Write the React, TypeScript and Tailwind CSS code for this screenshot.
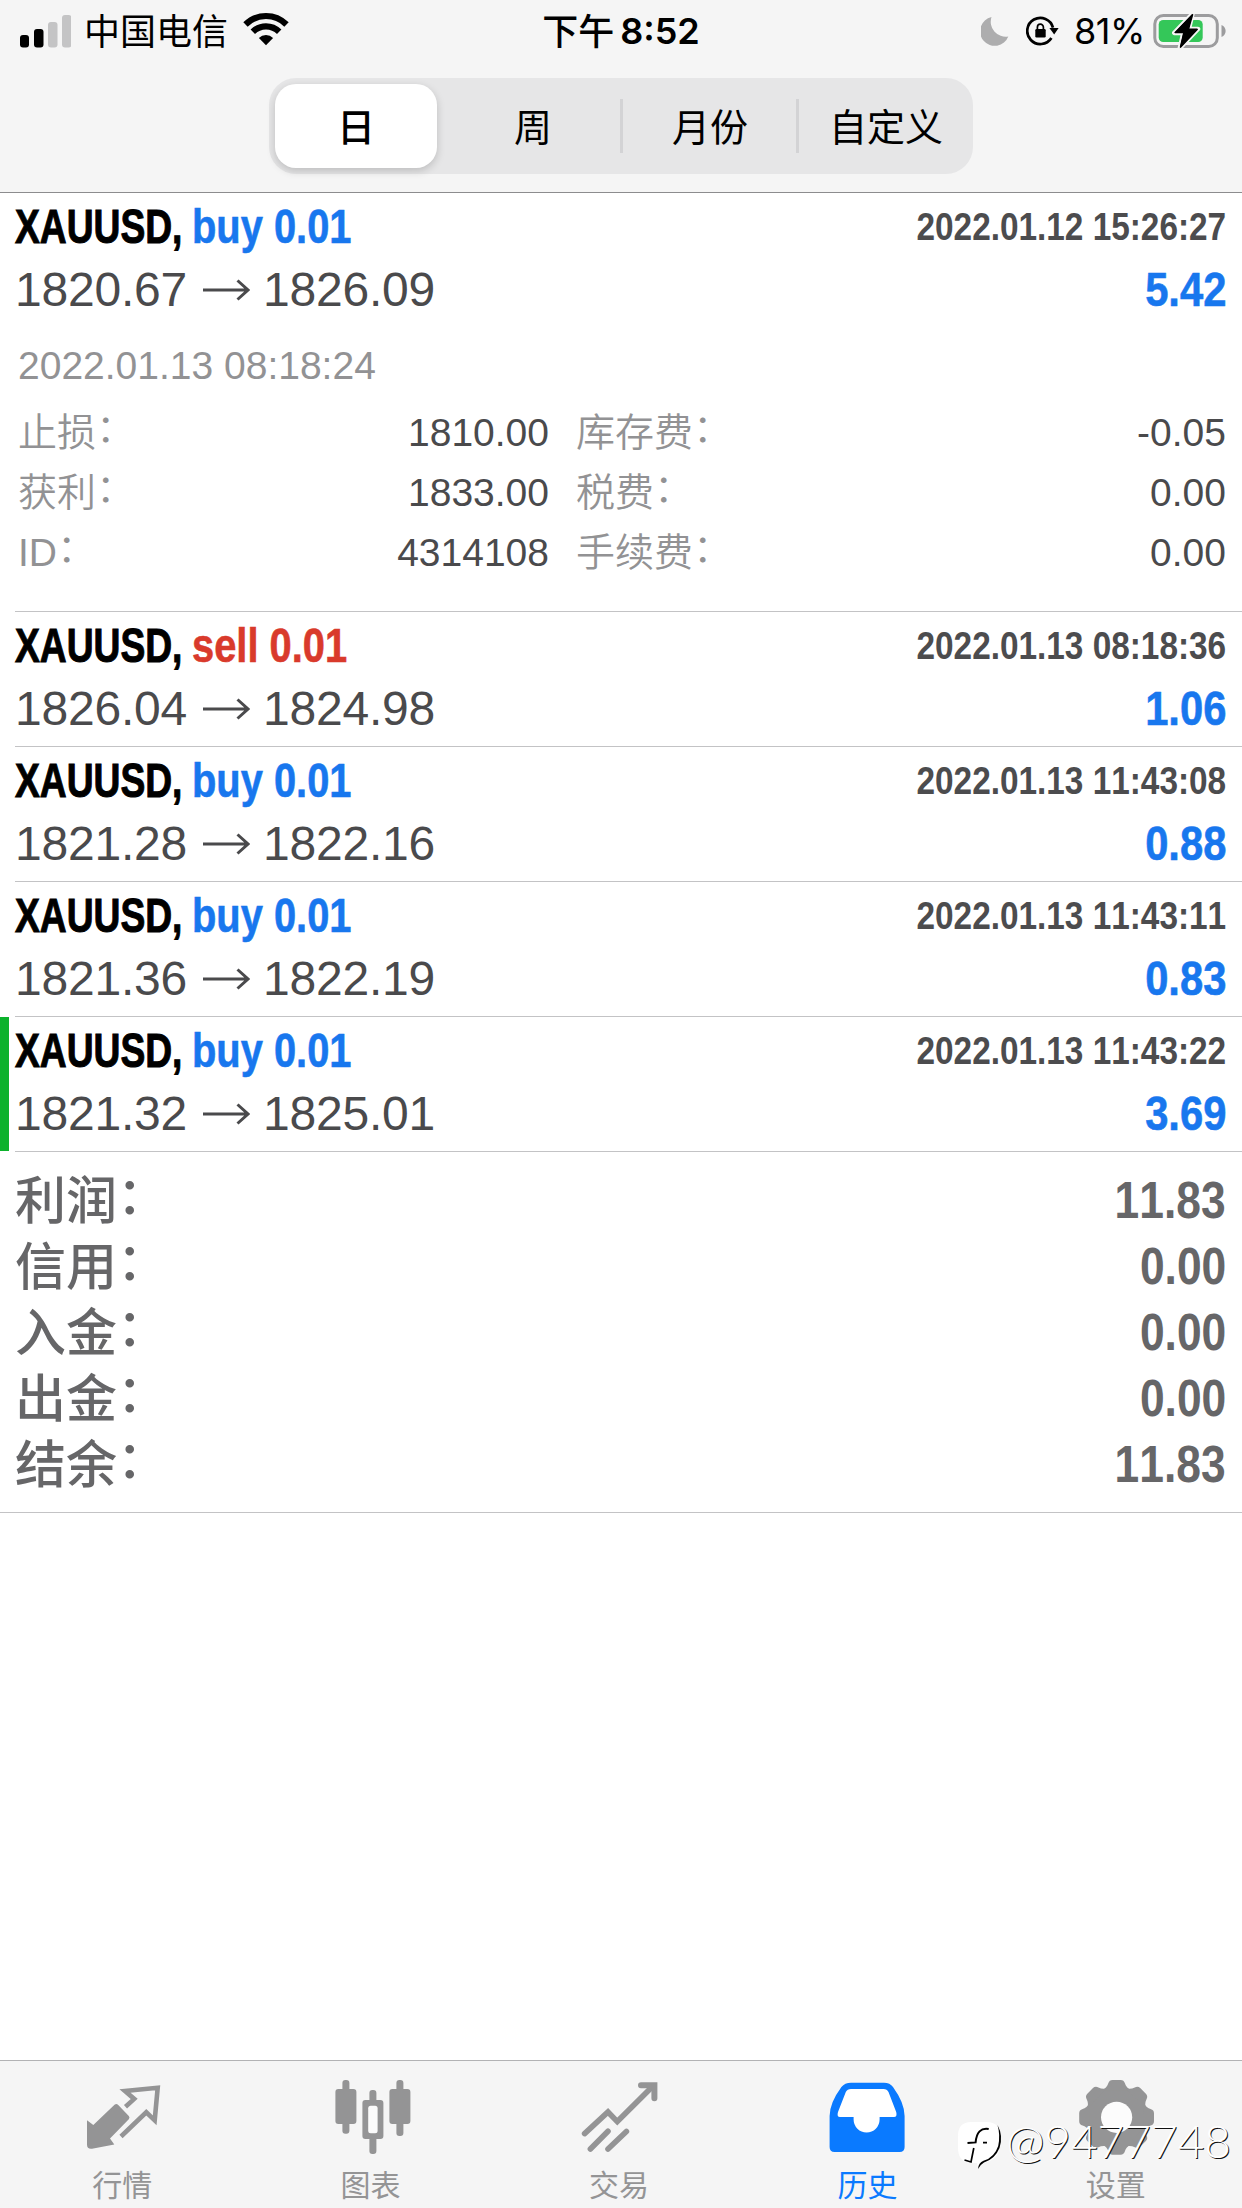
import type { ReactNode } from 'react';

interface Deal {
  side: 'buy' | 'sell';
  volume: string;
  open: string;
  close: string;
  time: string;
  profit: string;
  marked?: boolean;
}

const deals: Deal[] = [
  { side: 'buy', volume: '0.01', open: '1820.67', close: '1826.09', time: '2022.01.12 15:26:27', profit: '5.42' },
  { side: 'sell', volume: '0.01', open: '1826.04', close: '1824.98', time: '2022.01.13 08:18:36', profit: '1.06' },
  { side: 'buy', volume: '0.01', open: '1821.28', close: '1822.16', time: '2022.01.13 11:43:08', profit: '0.88' },
  { side: 'buy', volume: '0.01', open: '1821.36', close: '1822.19', time: '2022.01.13 11:43:11', profit: '0.83' },
  { side: 'buy', volume: '0.01', open: '1821.32', close: '1825.01', time: '2022.01.13 11:43:22', profit: '3.69', marked: true },
];

const details = [
  ['止损', '1810.00', '库存费', '-0.05'],
  ['获利', '1833.00', '税费', '0.00'],
  ['ID', '4314108', '手续费', '0.00'],
];

const totals = [
  ['利润', '11.83'],
  ['信用', '0.00'],
  ['入金', '0.00'],
  ['出金', '0.00'],
  ['结余', '11.83'],
];

const periods = ['日', '周', '月份', '自定义'];

function StatusBar() {
  return (
    <div className="grid h-[62px] grid-cols-[1fr_auto_1fr] items-center text-[36px] leading-[62px] text-black font-['Inter','Noto_Sans_CJK_SC',sans-serif]">
      <div className="flex items-center pl-5">
        <svg className="h-[33px] w-[51px]" viewBox="0 0 51 33">
          <rect x="0" y="20" width="9" height="12.5" rx="3" fill="#000" />
          <rect x="14" y="14" width="9.5" height="18.5" rx="3" fill="#000" />
          <rect x="28" y="7" width="9.5" height="25.5" rx="3" fill="#c4c4c5" />
          <rect x="42" y="0" width="9.5" height="32.5" rx="3" fill="#c4c4c5" />
        </svg>
        <span className="ml-[13px] translate-y-px">中国电信</span>
        <svg className="ml-[15px] h-[34px] w-[46px] -translate-y-[2px]" viewBox="0 0 46 34">
          <path d="M2.5 12.5A29 29 0 0 1 43.5 12.5" fill="none" stroke="#000" strokeWidth="6.2" />
          <path d="M9.8 19.8A18.6 18.6 0 0 1 36.2 19.8" fill="none" stroke="#000" strokeWidth="6.2" />
          <path d="M15.9 25.9A10 10 0 0 1 30.1 25.9L23 33.2Z" fill="#000" />
        </svg>
      </div>
      <div className="flex items-center font-semibold">
        <span className="translate-y-px font-medium">下午</span>
        <span className="ml-[6px]">8:52</span>
      </div>
      <div className="flex items-center justify-end pr-[15px]">
        <svg className="h-[29px] w-[28px]" viewBox="0 0 28 29">
          <path d="M10.5 0A14.6 14.6 0 1 0 27.3 19.5A15 15 0 0 1 10.5 0Z" fill="#adadae" />
        </svg>
        <svg className="ml-[17px] h-[30px] w-[33px]" viewBox="0 0 33 30">
          <path d="M27 11.6A13.1 13.1 0 1 0 25.4 22" fill="none" stroke="#000" strokeWidth="2.7" />
          <path d="M23.4 12H32.6L28.2 18.6Z" fill="#000" />
          <rect x="9.3" y="13" width="10.4" height="8.4" rx="1.2" fill="#000" />
          <path d="M11.4 13.5V11.2A3 3 0 0 1 17.4 11.2V13.5" fill="none" stroke="#000" strokeWidth="1.7" />
        </svg>
        <span className="ml-[15px] w-[73px] tracking-[-0.5px]">81%</span>
        <svg className="ml-[5px] h-[37px] w-[75px]" viewBox="0 0 75 37">
          <rect x="2.8" y="2.5" width="62.5" height="31" rx="8.5" fill="#f5f5f5" stroke="#9c9c9e" strokeWidth="3" />
          <rect x="6.7" y="7" width="44" height="22" rx="4.5" fill="#34c759" />
          <path d="M69.5 12C75 14 75 22 69.5 24Z" fill="#9c9c9e" />
          <path d="M40.5 .8L22.3 19.9H31.3L27.8 35.2L46 16H36.9Z" fill="#000" stroke="#f5f5f5" strokeWidth="4.5" paintOrder="stroke" strokeLinejoin="round" />
          <path d="M40.5 1.8L23.3 19.5H32L28.6 34L45 16.4H36.3Z" fill="#000" stroke="#000" strokeWidth="1.6" strokeLinejoin="round" />
        </svg>
      </div>
    </div>
  );
}

function PeriodSwitch() {
  return (
    <div className="mx-auto mt-4 grid h-24 w-[704px] grid-cols-4 items-center rounded-[27px] bg-[#e6e6e7] text-[38px] text-black font-['Noto_Sans_CJK_SC',sans-serif]">
      {periods.map((period, i) =>
        i === 0 ? (
          <div key={period} className="ml-[6px] flex h-[84px] w-[162px] items-center justify-center rounded-[21px] bg-white font-medium shadow-[0_3px_9px_rgba(0,0,0,0.18)]">
            <span className="-translate-y-[2px]">{period}</span>
          </div>
        ) : (
          <div key={period} className={`flex h-[54px] items-center justify-center ${i > 1 ? '-ml-px border-l-[3px] border-[#d3d3d5]' : ''}`}>
            <span className="-translate-y-[2px]">{period}</span>
          </div>
        )
      )}
    </div>
  );
}

// Fullwidth colon raised to the middle of the line
function Label({ text }: { text: string }) {
  return (
    <span>
      {text}
      <span className="inline-block -translate-y-[0.09em]">：</span>
    </span>
  );
}

function DealRow({ deal, children }: { deal: Deal; children?: ReactNode }) {
  return (
    <div className="flex">
      <div className={`w-[9px] ${deal.marked ? 'mb-px bg-[#0cb22c]' : ''}`} />
      <div className="ml-[6px] flex-1 border-b border-[#c3c3c5] pr-4">
        <div className="flex h-[64px] justify-between pt-1 leading-[60px]">
          <div className="flex text-[48px] font-bold whitespace-nowrap">
            <span className="w-[177px] origin-left scale-x-[0.775] text-black [-webkit-text-stroke:1px_#000]">XAUUSD,</span>
            <span
              className={`origin-left scale-x-[0.83] ${
                deal.side === 'buy'
                  ? 'text-[#1877ee] [-webkit-text-stroke:0.6px_#1877ee]'
                  : 'text-[#d93a2b] [-webkit-text-stroke:0.6px_#d93a2b]'
              }`}
            >
              {deal.side} {deal.volume}
            </span>
          </div>
          <span className="origin-right scale-x-[0.855] text-[39px] font-bold text-[#4c4c4e]">{deal.time}</span>
        </div>
        <div className="flex h-[70px] justify-between text-[48px] leading-[66px]">
          <div className="flex h-[66px] items-center text-[#4a4a4c]">
            <span className="w-[175px] tracking-[-0.2px]">{deal.open}</span>
            <svg className="mr-[13px] ml-3 h-[22px] w-[48px]" viewBox="0 0 48 22" fill="none" stroke="#4a4a4c" strokeWidth="3">
              <path d="M1 11H46M35.5 1.5L46 11L35.5 20.5" />
            </svg>
            <span className="tracking-[-0.2px]">{deal.close}</span>
          </div>
          <span className="origin-right scale-x-[0.87] font-bold text-[#1877ee] [-webkit-text-stroke:0.6px_#1877ee]">{deal.profit}</span>
        </div>
        {children}
      </div>
    </div>
  );
}

function DealDetails() {
  return (
    <div className="pt-[9px] pb-[28px] text-[39px] leading-[60px] text-[#929294]">
      <div className="mb-[7px] pl-[3px]">2022.01.13 08:18:24</div>
      {details.map(([left, leftValue, right, rightValue]) => (
        <div key={left} className="flex [font-weight:350]">
          <div className="flex w-[534px] justify-between pl-[3px]">
            <Label text={left} />
            <span className="font-normal text-[#4a4a4c]">{leftValue}</span>
          </div>
          <div className="ml-[27px] flex flex-1 justify-between">
            <Label text={right} />
            <span className="font-normal text-[#4a4a4c]">{rightValue}</span>
          </div>
        </div>
      ))}
    </div>
  );
}

function Totals() {
  return (
    <div className="border-b border-[#c3c3c5] pt-4 pr-4 pb-[14px] pl-[15px] text-[51px] leading-[66px] text-[#666668]">
      {totals.map(([label, value]) => (
        <div key={label} className="flex h-[66px] justify-between">
          <span className="translate-y-px font-medium">
            <Label text={label} />
          </span>
          <span className="origin-right scale-x-[0.87] font-bold">{value}</span>
        </div>
      ))}
    </div>
  );
}

const tabs = [
  {
    label: '行情',
    icon: (
      <>
        <path d="M3 44.2L9.3 49L30.5 28.8Q32.4 27.3 34 28.8L44.8 40Q46.2 41.6 44.8 43.2L26 62.5L30.3 68.6L8 72.8Q3 73.4 3 68.5Z" />
        <path d="M41.5 30.8L50.2 22.9L41 15L73.7 11.8L70.7 44.3L62.3 36.3L37 60.5" fill="none" stroke="currentColor" strokeWidth="4.6" />
      </>
    ),
  },
  {
    label: '图表',
    icon: (
      <>
        <rect x="9.4" y="4" width="7" height="53.7" rx="3" />
        <rect x="2.4" y="13" width="21" height="35" rx="3" />
        <rect x="63.4" y="4" width="7" height="56" rx="3" />
        <rect x="56.4" y="13" width="21" height="35" rx="3" />
        <rect x="36.4" y="14" width="7" height="64" rx="3" />
        <rect x="29.4" y="24" width="21" height="39" rx="3" />
        <rect x="35.2" y="29.7" width="9.4" height="27.6" rx="2.5" fill="#fbfbfb" />
      </>
    ),
  },
  {
    label: '交易',
    icon: (
      <g fill="none" stroke="currentColor" strokeLinecap="round" strokeWidth="5.6">
        <path d="M3.6 57.6L27 36L36.3 45.6L72 10" />
        <path d="M60 9.2H73.4V22.2" strokeWidth="6" />
        <path d="M9.4 73L27 55.2M27 73L45.4 55.4" />
      </g>
    ),
  },
  {
    label: '历史',
    icon: (
      <>
        <path d="M22 6.7H55Q61 6.7 64 11Q75.6 27 75.6 40V71Q75.6 76 70.6 76H5.6Q.6 76 .6 71V40Q.6 27 12.4 11Q15.8 6.7 22 6.7Z" />
        <path d="M22 13H54.5Q58 13 59.5 16L67.2 36Q68.5 41 65 41H50.6V43.5A13 13 0 0 1 24.6 43.5V41H11Q7.5 41 9 36L16.8 16Q18.3 13 22 13Z" fill="#fff" />
      </>
    ),
  },
  {
    label: '设置',
    icon: (
      <g transform="translate(38.6 41.3)">
        <circle r="31" />
        {[0, 45, 90, 135, 180, 225, 270, 315].map((angle) => (
          <path key={angle} d="M-14 -27Q-9.5 -30 -8.3 -34Q-7.3 -37.4 -4 -37.4H4Q7.3 -37.4 8.3 -34Q9.5 -30 14 -27Z" transform={`rotate(${angle})`} />
        ))}
        <circle r="15.6" fill="#fcfcfc" />
      </g>
    ),
  },
];

function TabBar() {
  return (
    <div className="grid h-[148px] grid-cols-5 border-t border-[#b2b2b4] bg-[#f5f5f5] pt-[15px]">
      {tabs.map(({ label, icon }) => (
        <div key={label} className={`flex flex-col items-center ${label === '历史' ? 'text-[#0a7aff]' : 'text-[#949495]'}`}>
          <svg className="h-20 w-20" viewBox="0 0 80 80" fill="currentColor">
            {icon}
          </svg>
          <span className="mt-[10px] mr-[4px] text-[30px] leading-10">{label}</span>
        </div>
      ))}
    </div>
  );
}

function Watermark() {
  return (
    <div className="absolute right-[11px] bottom-[38px] flex items-start">
      <svg className="mt-[6px] h-[51px] w-[47px]" viewBox="0 0 47 51">
        <path d="M14 3H30Q43 3 43 17V25Q43 38 33 42Q26 43 21 50L20 44H14Q1 43 1 29V17Q1 3 14 3Z" fill="#fff" />
        <path d="M40.500 6Q46.500 17 42.500 29Q38 40 27 43.500Q24 45 21 50Q21.500 43.500 26.500 41.800Q37.500 38.500 41.200 27Q43.500 16 40.500 6Z" fill="#000" />
        <path d="M31.700 10Q20 8 18.600 23.400L10.500 24" fill="none" stroke="#000" strokeWidth="2" />
        <path d="M16.800 29L14 43L7.500 41M26 23.700H30" fill="none" stroke="#000" strokeWidth="1.700" />
      </svg>
      <span className="ml-[2px] text-[46px] leading-[56px] font-light text-white [text-shadow:1px_1px_0_#111] font-['Lato',sans-serif]">@9477748</span>
    </div>
  );
}

export default function App() {
  return (
    <div className="relative flex h-[2208px] w-[1242px] flex-col overflow-hidden bg-white [font-kerning:none] font-['Liberation_Sans','Noto_Sans_CJK_SC',sans-serif]">
      <header className="h-[193px] border-b border-[#8c8c8e] bg-[#f5f5f5]">
        <StatusBar />
        <PeriodSwitch />
      </header>
      <main className="flex-1">
        {deals.map((deal, i) => (
          <DealRow key={deal.time} deal={deal}>
            {i === 0 && <DealDetails />}
          </DealRow>
        ))}
        <Totals />
      </main>
      <TabBar />
      <Watermark />
    </div>
  );
}
